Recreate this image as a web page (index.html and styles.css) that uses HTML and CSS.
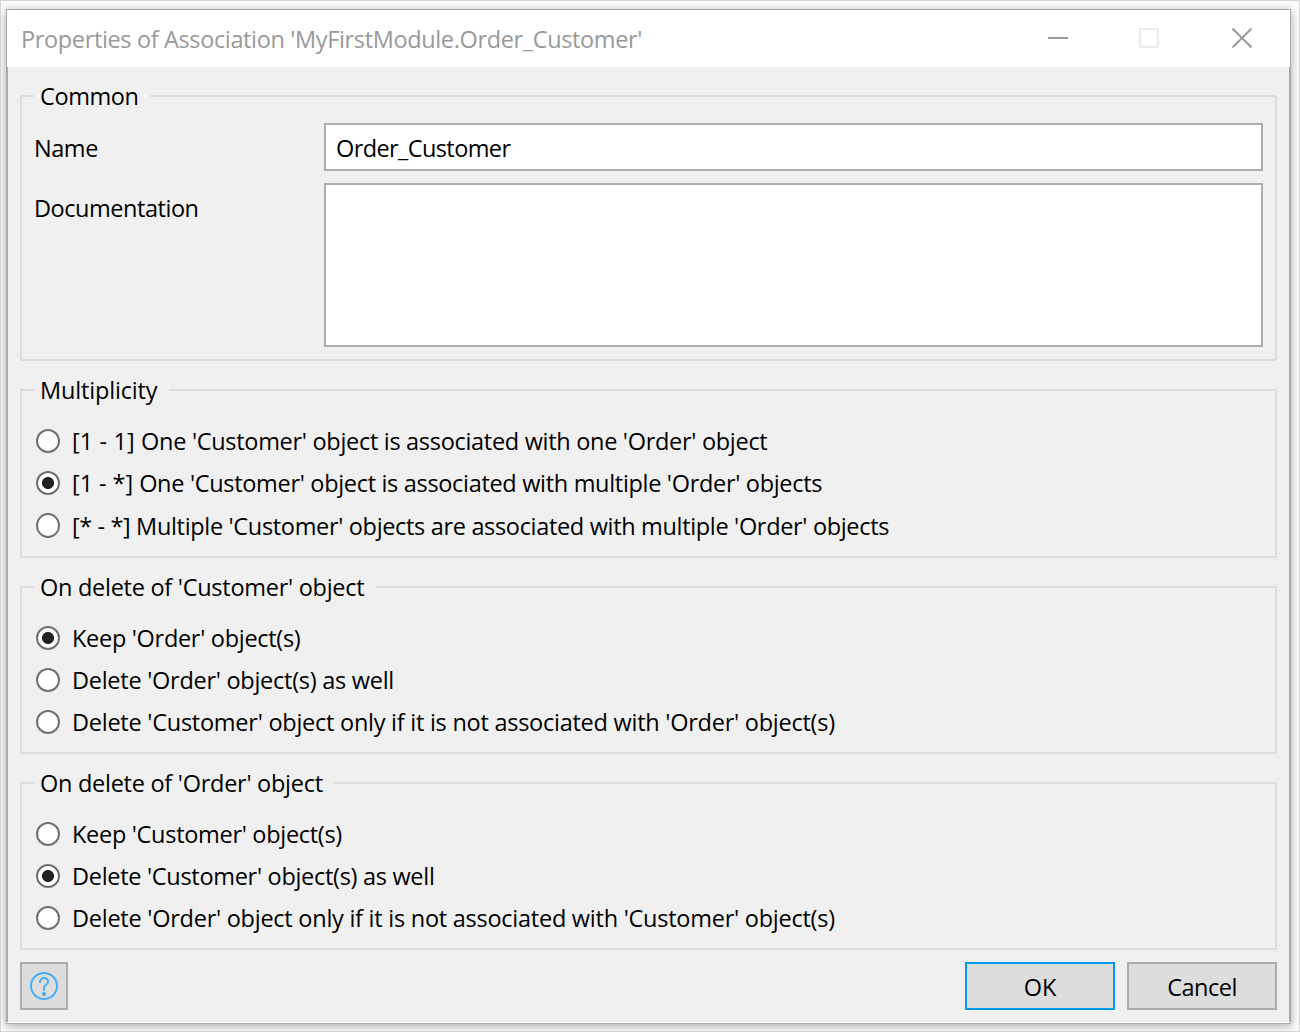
FILE: index.html
```html
<!DOCTYPE html>
<html lang="en">
<head>
<meta charset="utf-8">
<title>Properties of Association</title>
<link rel="stylesheet" href="styles.css">
</head>
<body>
<main class="window">
  <header class="titlebar">
    <h1 class="title">Properties of Association 'MyFirstModule.Order_Customer'</h1>
    <svg class="controls" width="206" height="20" viewBox="0 0 206 20" fill="none" stroke-width="2">
      <path d="M0 10H20" stroke="#999"/>
      <rect x="92" y="1" width="18" height="18" stroke="#ebebeb"/>
      <path d="M184.5 .5L203.500 19.500M203.500 .5L184.500 19.500" stroke="#999"/>
    </svg>
  </header>
  <form class="content">
    <fieldset class="group">
      <legend class="t-common">Common</legend>
      <div class="fields">
        <div class="label">Name</div>
        <div class="box name">Order_Customer</div>
        <div class="label">Documentation</div>
        <div class="box documentation"></div>
      </div>
    </fieldset>
    <fieldset class="group">
      <legend class="t-mult">Multiplicity</legend>
      <div class="options">
        <label class="option"><i class="radio"></i><span class="t-one"><span class="k-one">[1 - 1] </span>One 'Customer' object is associated with one 'Order' object</span></label>
        <label class="option"><i class="radio checked"></i><span class="t-many"><span class="k-many">[1 - *] </span>One 'Customer' object is associated with multiple 'Order' objects</span></label>
        <label class="option tall"><i class="radio"></i><span class="t-all"><span class="k-all">[* - *] </span>Multiple 'Customer' objects are associated with multiple 'Order' objects</span></label>
      </div>
    </fieldset>
    <fieldset class="group">
      <legend>On delete of 'Customer' object</legend>
      <div class="options">
        <label class="option"><i class="radio checked"></i><span class="t-short">Keep 'Order' object(s)</span></label>
        <label class="option"><i class="radio"></i><span>Delete 'Order' object(s) as well</span></label>
        <label class="option"><i class="radio"></i><span class="t-long">Delete 'Customer' object only if it is not associated with 'Order' object(s)</span></label>
      </div>
    </fieldset>
    <fieldset class="group">
      <legend>On delete of 'Order' object</legend>
      <div class="options">
        <label class="option"><i class="radio"></i><span class="t-short">Keep 'Customer' object(s)</span></label>
        <label class="option"><i class="radio checked"></i><span class="t-short">Delete 'Customer' object(s) as well</span></label>
        <label class="option"><i class="radio"></i><span class="t-long">Delete 'Order' object only if it is not associated with 'Customer' object(s)</span></label>
      </div>
    </fieldset>
    <footer class="actions">
      <button type="button" class="button help" aria-label="Help">
        <svg width="28" height="28" viewBox="0 0 28 28" fill="none" stroke="#45aef5" stroke-width="2">
          <circle cx="14" cy="14" r="13"/>
          <path d="M10 11V10a4 4 0 0 1 4-4c2.500 0 4 1.700 4 4C18 13.500 14 12.500 14 15.500V19"/>
          <circle cx="14" cy="22" r="2" fill="#45aef5" stroke="none"/>
        </svg>
      </button>
      <button type="button" class="button ok">OK</button>
      <button type="button" class="button cancel">Cancel</button>
    </footer>
  </form>
</main>
</body>
</html>
```
FILE: styles.css
```css
* { box-sizing: border-box; }

body {
  margin: 0;
  height: 1032px;
  padding: 8px 8px 7px 5px;
  border: 1px solid #d4d4d4;
  background: #fff;
  color: #000;
  font: 23.5px/32px "Open Sans", "Noto Sans", sans-serif;
  letter-spacing: -.27px;
  white-space: nowrap;
  overflow: hidden;
}

.window {
  display: flex;
  flex-direction: column;
  height: 1015px;
  border: 1px solid #aaa;
  background: #fff;
  box-shadow: 0 2px 9px 1px rgba(0, 0, 0, .3);
}

.titlebar {
  display: flex;
  justify-content: space-between;
  height: 57px;
  padding: 0 36px 0 14px;
}

.title {
  margin: 0;
  padding-top: 13px;
  font-size: 23.5px;
  font-weight: 400;
  letter-spacing: -.36px;
  color: #999;
}

.controls { margin-top: 18px; }

.content {
  display: flex;
  flex-direction: column;
  gap: 13px;
  height: 955px;
  padding: 13px 12px 0;
  border: solid #aaa;
  border-width: 0 1px;
  background: #f0f0f0;
}

.group {
  margin: 0;
  padding: 0;
  border: 2px solid #dcdcdc;
}

legend {
  height: 32px;
  margin-left: 12px;
  padding: 0 11.5px 0 6px;
}

.fields {
  display: grid;
  grid-template-columns: 290px 1fr;
  row-gap: 12px;
  padding: 11px 12px 12px;
}

.label {
  height: 48px;
  line-height: 50px;
  letter-spacing: -.46px;
}

.box {
  border: 2px solid #abadb3;
  background: #fff;
}

.name {
  height: 48px;
  padding-left: 10px;
  line-height: 46px;
  letter-spacing: -.6px;
}

.documentation { height: 164px; }

.options { padding: 14px 14px 9px; }

.option {
  display: flex;
  align-items: center;
  gap: 12px;
  height: 42px;
  line-height: 42px;
}

.radio {
  width: 24px;
  height: 24px;
  border: 2px solid #707070;
  border-radius: 50%;
  background: #fff;
}

.checked { background: radial-gradient(circle, #222 5.600px, #fff 6.400px); }

.tall { height: 43px; line-height: 44px; }
.tall .radio { height: 25px; }

/* Tracking per line of text */
.t-common { letter-spacing: -.4px; }
.t-mult { letter-spacing: -.17px; }
.t-one { letter-spacing: -.3px; }
.t-many { letter-spacing: -.315px; }
.t-all { letter-spacing: -.33px; }
.k-one { letter-spacing: .12px; }
.k-many { letter-spacing: -.06px; }
.k-all { letter-spacing: -.38px; }
.t-short { letter-spacing: -.3px; }
.t-long { letter-spacing: -.253px; }

.actions {
  display: flex;
  gap: 12px;
  margin-top: -1px;
}

.button {
  width: 150px;
  height: 48px;
  padding: 2px 0 0;
  border: 2px solid #adadad;
  background: #ddd;
  color: #000;
  font: inherit;
}

.ok { border-color: #0099eb; }

.cancel { letter-spacing: -.5px; }

.help {
  display: flex;
  align-items: center;
  justify-content: center;
  width: 48px;
  margin-right: auto;
  padding: 0;
}
```
